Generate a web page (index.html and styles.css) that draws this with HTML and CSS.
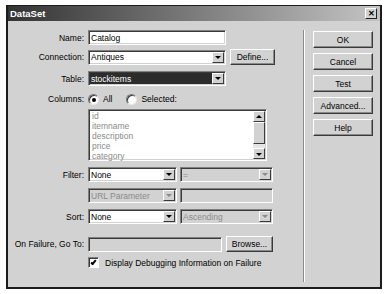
FILE: index.html
```html
<!DOCTYPE html>
<html lang="en">
<head>
    <meta charset="UTF-8">
    <title>DataSet</title>
    <link rel="stylesheet" href="styles.css">
</head>
<body>
    <div class="window">
        <div class="titlebar">
            <span class="title">DataSet</span>
            <span class="close">&#x2715;</span>
        </div>
        <div class="content">
            <div class="form">
                <div class="row r-name">
                    <label class="lbl">Name:</label>
                    <div class="field w-long"><span class="val">Catalog</span></div>
                </div>
                <div class="row r-conn">
                    <label class="lbl">Connection:</label>
                    <div class="field select w-long"><span class="val">Antiques</span><span class="arrow"></span></div>
                    <button class="btn define">Define...</button>
                </div>
                <div class="row r-table">
                    <label class="lbl">Table:</label>
                    <div class="field select w-long picked"><span class="val">stockitems</span><span class="arrow"></span></div>
                </div>
                <div class="row r-cols">
                    <label class="lbl">Columns:</label>
                    <span class="radio on"></span><span class="opt">All</span>
                    <span class="radio"></span><span class="opt">Selected:</span>
                </div>
                <div class="row r-list">
                    <span class="lbl"></span>
                    <div class="field listbox">
                        <ul class="items">
                            <li>id</li>
                            <li>itemname</li>
                            <li>description</li>
                            <li>price</li>
                            <li>category</li>
                        </ul>
                        <div class="scroll">
                            <span class="sbtn up"></span>
                            <span class="thumb"></span>
                            <span class="track"></span>
                            <span class="sbtn down"></span>
                        </div>
                    </div>
                </div>
                <div class="row r-filter">
                    <label class="lbl">Filter:</label>
                    <div class="field select w-half"><span class="val">None</span><span class="arrow"></span></div>
                    <div class="field select w-half2 off"><span class="val">=</span><span class="arrow"></span></div>
                </div>
                <div class="row r-param">
                    <span class="lbl"></span>
                    <div class="field select w-half off"><span class="val">URL Parameter</span><span class="arrow"></span></div>
                    <div class="field w-half2 off"></div>
                </div>
                <div class="row r-sort">
                    <label class="lbl">Sort:</label>
                    <div class="field select w-half"><span class="val">None</span><span class="arrow"></span></div>
                    <div class="field select w-half2 off"><span class="val">Ascending</span><span class="arrow"></span></div>
                </div>
                <div class="row r-fail">
                    <label class="lbl">On Failure, Go To:</label>
                    <div class="field w-fail off"></div>
                    <button class="btn browse">Browse...</button>
                </div>
                <div class="row r-debug">
                    <span class="lbl"></span>
                    <span class="check"></span>
                    <span class="opt">Display Debugging Information on Failure</span>
                </div>
            </div>
            <div class="sep"></div>
            <div class="buttons">
                <button class="btn side">OK</button>
                <button class="btn side">Cancel</button>
                <button class="btn side">Test</button>
                <button class="btn side">Advanced...</button>
                <button class="btn side">Help</button>
            </div>
        </div>
    </div>
</body>
</html>
```

FILE: styles.css
```css
*, *::before, *::after {
    box-sizing: border-box;
}
body {
    margin: 0;
    background: #fff;
    font-family: "Liberation Sans", Arial, sans-serif;
    font-size: 8.5px;
    color: #000;
}
.window {
    margin: 5px 0 0 6px;
    width: 376px;
    height: 284px;
    border: 2px solid #1c1c1c;
    border-top-width: 1px;
    background: #d2d2d2;
    display: flex;
    flex-direction: column;
}
.titlebar {
    height: 15px;
    background: linear-gradient(90deg, #333, #c4c4c4);
    display: flex;
    align-items: center;
    justify-content: space-between;
    padding: 0 3px 0 2px;
}
.title {
    color: #fff;
    font-weight: bold;
    font-size: 9.5px;
}
.close {
    width: 12px;
    height: 11px;
    background: #d2d2d2;
    border: 1px solid;
    border-color: #fff #222 #222 #fff;
    font-size: 8px;
    font-weight: bold;
    line-height: 9px;
    text-align: center;
}
.content {
    flex: 1;
    display: flex;
}
.form {
    width: 295px;
    padding-top: 9px;
}
.row {
    display: flex;
    align-items: center;
    height: 15px;
}
.lbl {
    width: 76px;
    margin-right: 4px;
    text-align: right;
    flex-shrink: 0;
}
.r-conn { margin-top: 4px; height: 16px; }
.r-table { margin-top: 6px; }
.r-cols { margin-top: 6px; height: 14px; }
.r-list { margin-top: 3px; height: 52px; align-items: stretch; }
.r-filter { margin-top: 6px; }
.r-param { margin-top: 6px; }
.r-sort { margin-top: 6px; }
.r-fail { margin-top: 12px; height: 16px; }
.r-debug { margin-top: 4px; height: 13px; }

.field {
    height: 15px;
    background: #fff;
    border: 1px solid;
    border-color: #808080 #fff #fff #808080;
    box-shadow: inset 1px 1px #3a3a3a, inset -1px -1px #d2d2d2;
    display: flex;
    align-items: center;
    padding: 0 2px;
    position: relative;
}
.val {
    flex: 1;
    white-space: nowrap;
    overflow: hidden;
}
.w-long { width: 138px; }
.w-half { width: 89px; }
.w-half2 { width: 93px; margin-left: 3px; }
.w-fail { width: 134px; }
.field.off {
    background: #d2d2d2;
    color: #8a8a8a;
}
.field.picked .val {
    background: #2c2c2c;
    color: #fff;
    margin-left: -1px;
    padding-left: 1px;
    align-self: stretch;
    line-height: 13px;
}
.field.picked {
    padding-top: 1px;
    padding-bottom: 1px;
}
.arrow {
    width: 12px;
    height: 11px;
    margin-right: -1px;
    background: #d2d2d2;
    border: 1px solid;
    border-color: #fff #3a3a3a #3a3a3a #fff;
    position: relative;
    flex-shrink: 0;
}
.arrow::after {
    content: "";
    position: absolute;
    left: 2px;
    top: 3px;
    border-left: 3px solid transparent;
    border-right: 3px solid transparent;
    border-top: 3px solid #000;
}
.off .arrow::after {
    border-top-color: #8a8a8a;
}

.btn {
    font: inherit;
    color: #000;
    background: #d2d2d2;
    height: 16px;
    padding: 0;
    border: 1px solid;
    border-color: #fff #3a3a3a #3a3a3a #fff;
    box-shadow: inset -1px -1px #8a8a8a;
}
.define { width: 45px; margin-left: 4px; }
.browse { width: 47px; margin-left: 4px; }

.radio {
    width: 11px;
    height: 11px;
    border-radius: 50%;
    background: #fff;
    border: 1px solid;
    border-color: #707070 #e8e8e8 #e8e8e8 #707070;
    box-shadow: inset 1px 1px #3a3a3a;
    position: relative;
    flex-shrink: 0;
}
.radio.on::after {
    content: "";
    position: absolute;
    left: 3px;
    top: 3px;
    width: 4px;
    height: 4px;
    border-radius: 50%;
    background: #000;
}
.opt {
    margin-left: 4px;
    margin-right: 14px;
}
.check {
    width: 11px;
    height: 11px;
    background: #fff;
    border: 1px solid;
    border-color: #808080 #fff #fff #808080;
    box-shadow: inset 1px 1px #3a3a3a;
    position: relative;
    flex-shrink: 0;
}
.check::after {
    content: "";
    position: absolute;
    left: 3px;
    top: 1px;
    width: 3px;
    height: 6px;
    border: solid #000;
    border-width: 0 2px 2px 0;
    transform: rotate(40deg);
}
.r-debug .opt {
    margin-left: 6px;
}

.listbox {
    width: 179px;
    height: 52px;
    padding: 1px 1px 1px 2px;
    align-items: stretch;
}
.items {
    flex: 1;
    margin: 0;
    padding: 0 0 0 1px;
    list-style: none;
    color: #8a8a8a;
    line-height: 10px;
}
.scroll {
    width: 12px;
    display: flex;
    flex-direction: column;
    background: #e6e6e6;
}
.sbtn, .thumb {
    background: #d2d2d2;
    border: 1px solid;
    border-color: #fff #3a3a3a #3a3a3a #fff;
    position: relative;
}
.sbtn { height: 11px; }
.thumb { height: 22px; }
.track { flex: 1; }
.sbtn::after {
    content: "";
    position: absolute;
    left: 2px;
    top: 4px;
    border-left: 3px solid transparent;
    border-right: 3px solid transparent;
}
.up::after { border-bottom: 3px solid #000; top: 3px; }
.down::after { border-top: 3px solid #000; }

.sep {
    width: 2px;
    border-left: 1px solid #8a8a8a;
    border-right: 1px solid #fff;
    margin: 9px 0 5px;
}
.buttons {
    padding: 10px 0 0 8px;
    display: flex;
    flex-direction: column;
    gap: 5px;
}
.btn.side {
    width: 60px;
    height: 17px;
}
```
